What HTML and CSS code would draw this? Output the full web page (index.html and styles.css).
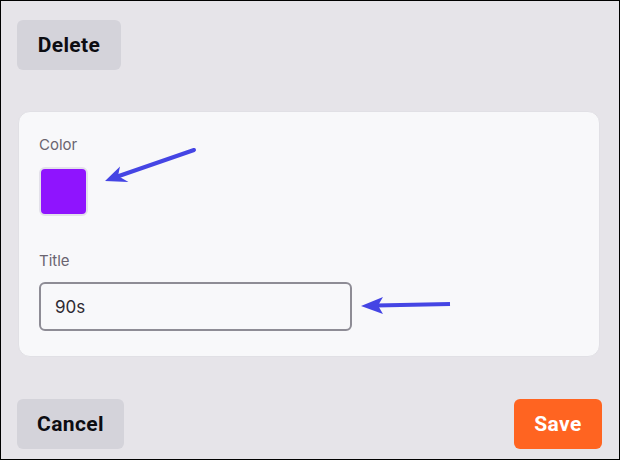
FILE: index.html
```html
<!DOCTYPE html>
<html lang="en">
<head>
<meta charset="utf-8">
<title>Edit</title>
<link rel="stylesheet" href="styles.css">
</head>
<body>
<div class="page">
  <div class="top">
    <button class="btn btn-gray">Delete</button>
  </div>
  <div class="card">
    <div class="field">
      <label class="label">Color</label>
      <div class="swatch"></div>
    </div>
    <div class="field field-title">
      <label class="label">Title</label>
      <div class="input">90s</div>
    </div>
  </div>
  <div class="footer">
    <button class="btn btn-gray btn-cancel">Cancel</button>
    <button class="btn btn-save">Save</button>
  </div>
  <svg class="arrows" width="620" height="460" viewBox="0 0 620 460">
    <line x1="194" y1="150" x2="116" y2="177" stroke="#4545e4" stroke-width="4" stroke-linecap="round"/>
    <polygon points="105,181 120,166.5 118,176 128.5,182" fill="#4545e4"/>
    <line x1="450" y1="304" x2="376" y2="305.5" stroke="#4545e4" stroke-width="4"/>
    <polygon points="361,306 383,297 378,305.5 383,314" fill="#4545e4"/>
  </svg>
</div>
</body>
</html>
```

FILE: styles.css
```css
* { box-sizing: border-box; }
html, body { margin: 0; padding: 0; }
body {
  width: 620px;
  height: 460px;
  background: #e6e4e9;
  font-family: Inter, "Liberation Sans", sans-serif;
}
.page {
  position: relative;
  width: 620px;
  height: 460px;
  border: 1px solid #000;
  padding: 19px 17px 10px 16px;
  display: flex;
  flex-direction: column;
}
.top { display: flex; }
.btn {
  height: 50px;
  border: none;
  border-radius: 6px;
  font-family: Roboto, "Liberation Sans", sans-serif;
  font-weight: 700;
  font-size: 21px;
  letter-spacing: 0.4px;
  color: #0d0d12;
  padding: 0;
  cursor: pointer;
}
.btn-gray { background: #d4d3da; width: 104px; }
.btn-cancel { width: 107px; }
.btn-save {
  background: #ff6421;
  color: #fff;
  width: 88px;
}
.card {
  margin: 41px 2px 0 1px;
  height: 246px;
  background: #f8f8fa;
  border: 1px solid #e1e0e5;
  border-radius: 12px;
  padding: 24px 20px 0 20px;
  display: flex;
  flex-direction: column;
}
.field { display: flex; flex-direction: column; align-items: flex-start; }
.label {
  font-size: 15px;
  line-height: 18px;
  color: #6a6470;
  margin-bottom: 13px;
}
.swatch {
  width: 49px;
  height: 49px;
  background: #8f14fe;
  border: 2px solid #e3e1ea;
  border-radius: 6px;
}
.field-title { margin-top: 36px; }
.field-title .label { margin-bottom: 12px; }
.input {
  width: 313px;
  height: 49px;
  border: 2px solid #8e8c95;
  border-radius: 6px;
  background: #f8f8fa;
  padding: 0 14px;
  display: flex;
  align-items: center;
  font-size: 17px;
  color: #2e2b33;
}
.footer {
  margin-top: auto;
  display: flex;
  justify-content: space-between;
  align-items: center;
}
.arrows {
  position: absolute;
  left: -1px;
  top: -1px;
  pointer-events: none;
}
```
